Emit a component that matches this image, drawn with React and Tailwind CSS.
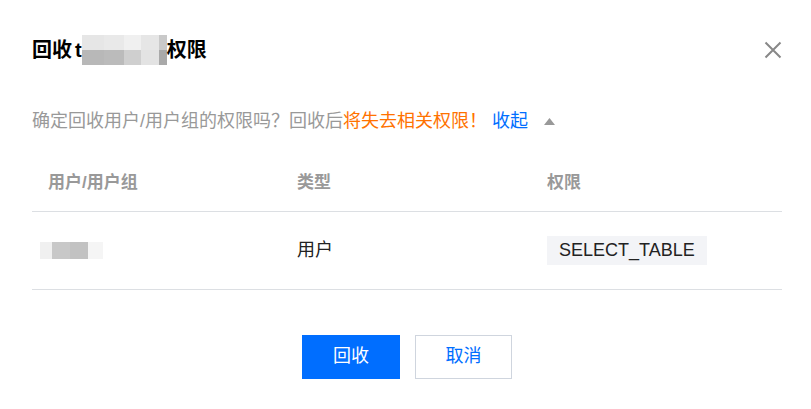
const font = { fontFamily: '"Liberation Sans", "Noto Sans CJK SC", sans-serif' };

const TitleMask = () => (
  <span className="inline-grid h-[30px] grid-cols-[22px_20px_17px_18px_8px] grid-rows-2 align-middle">
    <span className="bg-[#e6e6e6]" />
    <span className="bg-[#e9e9e9]" />
    <span className="bg-[#f0f0f0]" />
    <span className="bg-[#e6e6e6]" />
    <span className="bg-[#c9c9c9]" />
    <span className="bg-[#b8b8b8]" />
    <span className="bg-[#bbbbbb]" />
    <span className="bg-[#cfcfcf]" />
    <span className="bg-[#e3e3e3]" />
    <span className="bg-[#a9a9a9]" />
  </span>
);

const NameMask = () => (
  <div className="flex h-[17px] w-[63px]">
    <div className="w-[12px] bg-[#f0f0f0]" />
    <div className="w-[18px] bg-[#c8c8c8]" />
    <div className="w-[18px] bg-[#c2c2c2]" />
    <div className="w-[15px] bg-[#f5f5f5]" />
  </div>
);

export default function App() {
  return (
    <div className="h-[409px] w-[811px] bg-white pl-8 pr-[29px] pt-[35px] text-[#222]" style={font}>
      <div className="flex items-center justify-between">
        <h2 className="flex items-center text-[20px] font-bold leading-[28px] text-black">
          <span>回收</span>
          <span className="ml-[3px]">t</span>
          <TitleMask />
          <span>权限</span>
        </h2>
        <button className="mr-[-1px] flex h-[20px] w-[20px] items-center justify-center text-[#888]">
          <svg width="18" height="18" viewBox="0 0 18 18" fill="none" stroke="currentColor" strokeWidth="2">
            <path d="M1.5 1.5 L16.5 16.5 M16.5 1.5 L1.5 16.5" />
          </svg>
        </button>
      </div>

      <p className="mt-[43px] flex items-center text-[18px] leading-[26px] text-[#999]">
        <span>确定回收用户/用户组的权限吗？回收后</span>
        <span className="text-[#ff7200]">将失去相关权限！</span>
        <span className="ml-[5px] text-[#006eff]">收起</span>
        <svg className="ml-[16px]" width="11" height="7" viewBox="0 0 11 7">
          <path d="M5.5 0 L11 7 L0 7 Z" fill="#999" />
        </svg>
      </p>

      <table className="mt-[21px] w-[750px] table-fixed border-collapse text-left">
        <thead>
          <tr className="h-[56px] border-b border-[#dcdfe3] text-[17px] font-bold text-[#999]">
            <th className="pl-4 font-bold">用户/用户组</th>
            <th className="pl-[15px] font-bold">类型</th>
            <th className="pl-[15px] font-bold">权限</th>
          </tr>
        </thead>
        <tbody>
          <tr className="h-[78px] border-b border-[#dcdfe3] text-[18px]">
            <td className="pl-2"><NameMask /></td>
            <td className="pl-[15px]">用户</td>
            <td className="pl-[15px]">
              <span className="inline-block bg-[#f3f4f7] px-3 text-[18px] leading-[29px]">SELECT_TABLE</span>
            </td>
          </tr>
        </tbody>
      </table>

      <div className="mt-[45px] flex w-[750px] justify-center gap-[15px]">
        <button className="h-[44px] w-[98px] bg-[#006eff] text-[18px] text-white">回收</button>
        <button className="h-[44px] w-[97px] border border-[#cfd5de] bg-white text-[18px] text-[#006eff]">取消</button>
      </div>
    </div>
  );
}
